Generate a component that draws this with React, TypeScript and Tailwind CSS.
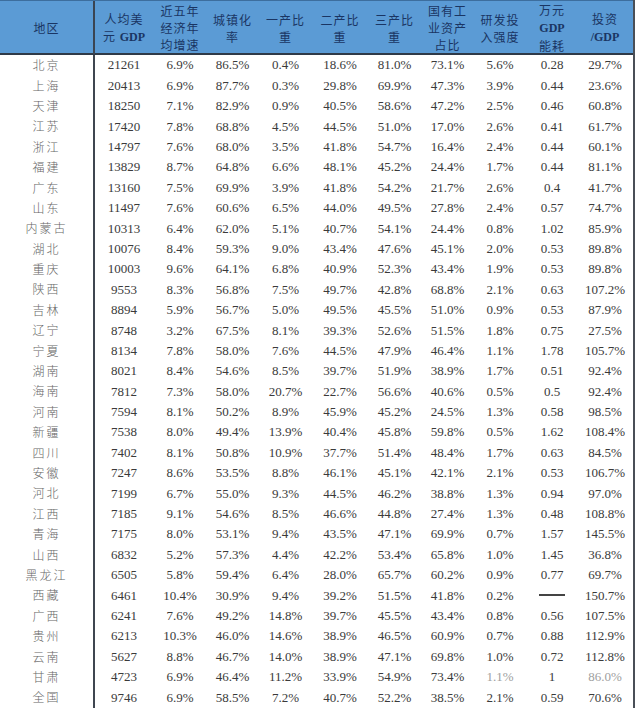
import React from 'react';

type Row = [string, ...string[]];

const rows: Row[] = [
  ['北京', '21261', '6.9%', '86.5%', '0.4%', '18.6%', '81.0%', '73.1%', '5.6%', '0.28', '29.7%'],
  ['上海', '20413', '6.9%', '87.7%', '0.3%', '29.8%', '69.9%', '47.3%', '3.9%', '0.44', '23.6%'],
  ['天津', '18250', '7.1%', '82.9%', '0.9%', '40.5%', '58.6%', '47.2%', '2.5%', '0.46', '60.8%'],
  ['江苏', '17420', '7.8%', '68.8%', '4.5%', '44.5%', '51.0%', '17.0%', '2.6%', '0.41', '61.7%'],
  ['浙江', '14797', '7.6%', '68.0%', '3.5%', '41.8%', '54.7%', '16.4%', '2.4%', '0.44', '60.1%'],
  ['福建', '13829', '8.7%', '64.8%', '6.6%', '48.1%', '45.2%', '24.4%', '1.7%', '0.44', '81.1%'],
  ['广东', '13160', '7.5%', '69.9%', '3.9%', '41.8%', '54.2%', '21.7%', '2.6%', '0.4', '41.7%'],
  ['山东', '11497', '7.6%', '60.6%', '6.5%', '44.0%', '49.5%', '27.8%', '2.4%', '0.57', '74.7%'],
  ['内蒙古', '10313', '6.4%', '62.0%', '5.1%', '40.7%', '54.1%', '24.4%', '0.8%', '1.02', '85.9%'],
  ['湖北', '10076', '8.4%', '59.3%', '9.0%', '43.4%', '47.6%', '45.1%', '2.0%', '0.53', '89.8%'],
  ['重庆', '10003', '9.6%', '64.1%', '6.8%', '40.9%', '52.3%', '43.4%', '1.9%', '0.53', '89.8%'],
  ['陕西', '9553', '8.3%', '56.8%', '7.5%', '49.7%', '42.8%', '68.8%', '2.1%', '0.63', '107.2%'],
  ['吉林', '8894', '5.9%', '56.7%', '5.0%', '49.5%', '45.5%', '51.0%', '0.9%', '0.53', '87.9%'],
  ['辽宁', '8748', '3.2%', '67.5%', '8.1%', '39.3%', '52.6%', '51.5%', '1.8%', '0.75', '27.5%'],
  ['宁夏', '8134', '7.8%', '58.0%', '7.6%', '44.5%', '47.9%', '46.4%', '1.1%', '1.78', '105.7%'],
  ['湖南', '8021', '8.4%', '54.6%', '8.5%', '39.7%', '51.9%', '38.9%', '1.7%', '0.51', '92.4%'],
  ['海南', '7812', '7.3%', '58.0%', '20.7%', '22.7%', '56.6%', '40.6%', '0.5%', '0.5', '92.4%'],
  ['河南', '7594', '8.1%', '50.2%', '8.9%', '45.9%', '45.2%', '24.5%', '1.3%', '0.58', '98.5%'],
  ['新疆', '7538', '8.0%', '49.4%', '13.9%', '40.4%', '45.8%', '59.8%', '0.5%', '1.62', '108.4%'],
  ['四川', '7402', '8.1%', '50.8%', '10.9%', '37.7%', '51.4%', '48.4%', '1.7%', '0.63', '84.5%'],
  ['安徽', '7247', '8.6%', '53.5%', '8.8%', '46.1%', '45.1%', '42.1%', '2.1%', '0.53', '106.7%'],
  ['河北', '7199', '6.7%', '55.0%', '9.3%', '44.5%', '46.2%', '38.8%', '1.3%', '0.94', '97.0%'],
  ['江西', '7185', '9.1%', '54.6%', '8.5%', '46.6%', '44.8%', '27.4%', '1.3%', '0.48', '108.8%'],
  ['青海', '7175', '8.0%', '53.1%', '9.4%', '43.5%', '47.1%', '69.9%', '0.7%', '1.57', '145.5%'],
  ['山西', '6832', '5.2%', '57.3%', '4.4%', '42.2%', '53.4%', '65.8%', '1.0%', '1.45', '36.8%'],
  ['黑龙江', '6505', '5.8%', '59.4%', '6.4%', '28.0%', '65.7%', '60.2%', '0.9%', '0.77', '69.7%'],
  ['西藏', '6461', '10.4%', '30.9%', '9.4%', '39.2%', '51.5%', '41.8%', '0.2%', '—', '150.7%'],
  ['广西', '6241', '7.6%', '49.2%', '14.8%', '39.7%', '45.5%', '43.4%', '0.8%', '0.56', '107.5%'],
  ['贵州', '6213', '10.3%', '46.0%', '14.6%', '38.9%', '46.5%', '60.9%', '0.7%', '0.88', '112.9%'],
  ['云南', '5627', '8.8%', '46.7%', '14.0%', '38.9%', '47.1%', '69.8%', '1.0%', '0.72', '112.8%'],
  ['甘肃', '4723', '6.9%', '46.4%', '11.2%', '33.9%', '54.9%', '73.4%', '1.1%', '1', '86.0%'],
  ['全国', '9746', '6.9%', '58.5%', '7.2%', '40.7%', '52.2%', '38.5%', '2.1%', '0.59', '70.6%'],
];

const cols = 'grid grid-cols-[95px_58px_54px_51px_55px_54px_55px_51px_54px_50px_56px]';

const serif = { fontFamily: '"Liberation Serif", "Times New Roman", serif' };

const Gdp = () => <span className="font-bold tracking-normal" style={serif}>GDP</span>;

const headers: React.ReactNode[][] = [
  ['地区'],
  ['人均美', <>元 <Gdp /></>],
  ['近五年', '经济年', '均增速'],
  ['城镇化', '率'],
  ['一产比', '重'],
  ['二产比', '重'],
  ['三产比', '重'],
  ['国有工', '业资产', '占比'],
  ['研发投', '入强度'],
  ['万元', <Gdp />, '能耗'],
  ['投资', <span className="font-bold tracking-normal" style={serif}>/GDP</span>],
];

export default function App() {
  return (
    <div
      className="w-[640px] h-[708px] bg-white overflow-hidden"
      style={{ fontFamily: '"Noto Sans CJK SC", "Noto Sans", sans-serif' }}
    >
      <div className="w-[635px] border-r-2 border-[#4a4f57]">
        {/* header */}
        <div className={`${cols} h-[55px] bg-[#5b9bd5] border-t border-b-2 border-t-[#3d6e9e] border-b-[#2f3a48]`}>
          {headers.map((lines, i) => (
            <div
              key={i}
              className={`flex flex-col items-center justify-center text-[12px] leading-[17px] font-normal tracking-[1px] text-[#1a3563] ${i === 0 ? 'border-r-2 border-[#3a4452]' : ''}`}
            >
              {lines.map((l, j) => (
                <span key={j}>{l}</span>
              ))}
            </div>
          ))}
        </div>
        {/* body */}
        <div className="border-b-2 border-[#9a9a9a]">
          {rows.map((r, ri) => (
            <div key={ri} className={`${cols} h-[20.4px]`}>
              {r.map((v, ci) => {
                if (ci === 0) {
                  return (
                    <div
                      key={ci}
                      className="flex items-center justify-center border-r-2 border-[#3f4650] text-[12px] font-light text-[#666666] tracking-[2px]"
                    >
                      {v}
                    </div>
                  );
                }
                const faded = ri === 30 && (ci === 8 || ci === 10);
                return (
                  <div
                    key={ci}
                    className={`flex items-center justify-center text-[13px] ${faded ? 'text-[#a0a0a0]' : 'text-[#3a3a3a]'}`}
                    style={serif}
                  >
                    {v === '—' ? <span className="block w-[26px] h-[2px] bg-[#444]" /> : v}
                  </div>
                );
              })}
            </div>
          ))}
        </div>
      </div>
    </div>
  );
}
